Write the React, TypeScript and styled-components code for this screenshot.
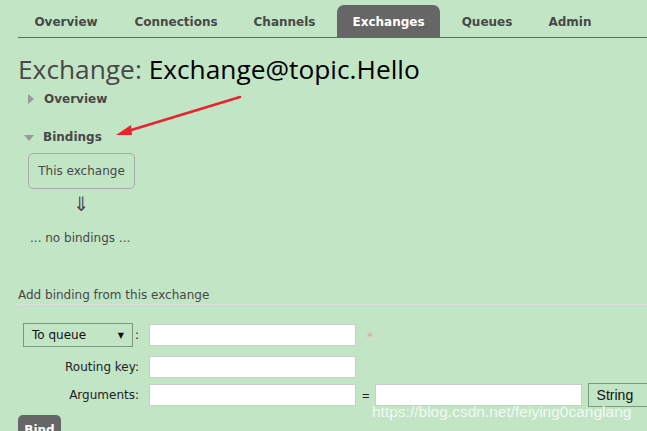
import React from "react";
import styled, { createGlobalStyle } from "styled-components";

const Global = createGlobalStyle`
  html, body { margin: 0; padding: 0; }
  body {
    background: #c2e5c6;
    font-family: "DejaVu Sans", Verdana, sans-serif;
    font-size: 12px;
    color: #484848;
    width: 647px;
    height: 431px;
    overflow: hidden;
  }
`;

const Page = styled.div`
  position: relative;
  width: 647px;
  height: 431px;
  overflow: hidden;
`;

const Nav = styled.ul`
  list-style: none;
  margin: 0 0 0 18px;
  padding: 5px 0 0 1px;
  display: flex;
  gap: 7px;
  border-bottom: 1px solid #666;
  width: 700px;
`;

const Tab = styled.li<{ $active?: boolean; $w: number }>`
  flex-shrink: 0;
  width: ${(p) => p.$w}px;
  height: 32px;
  display: flex;
  align-items: center;
  justify-content: center;
  padding-top: 1px;
  box-sizing: border-box;
  font-weight: bold;
  font-size: 12px;
  border-radius: 7px 7px 0 0;
  color: ${(p) => (p.$active ? "#fff" : "#484848")};
  background: ${(p) => (p.$active ? "#666" : "transparent")};
`;

const Main = styled.div`
  padding-left: 18px;
`;

const Title = styled.h1`
  margin: 16px 0 0 0;
  font-family: "Open Sans", "DejaVu Sans", sans-serif;
  font-weight: normal;
  font-size: 26.3px;
  line-height: 31px;
  color: #484848;
  white-space: nowrap;
`;

const Name = styled.span`
  color: #000;
`;

const Section = styled.h2<{ $mt: number }>`
  margin: ${(p) => p.$mt}px 0 0 0;
  font-size: 12px;
  font-weight: bold;
  line-height: 20px;
  color: #484848;
  display: flex;
  align-items: center;
`;

const Tri = styled.span<{ $open?: boolean }>`
  display: inline-block;
  width: 0;
  height: 0;
  ${(p) =>
    p.$open
      ? `border-left: 5px solid transparent; border-right: 5px solid transparent; border-top: 6px solid #999; margin: 1px 9px 0 6px;`
      : `border-top: 5px solid transparent; border-bottom: 5px solid transparent; border-left: 6px solid #999; margin: 0 10px 0 10px;`}
`;

const Bindings = styled.div`
  margin-left: 10px;
  width: 107px;
  display: flex;
  flex-direction: column;
  align-items: center;
`;

const ExBox = styled.div`
  margin-top: 6px;
  width: 107px;
  height: 36px;
  box-sizing: border-box;
  border: 1px solid #aaa;
  border-radius: 5px;
  display: flex;
  align-items: center;
  justify-content: center;
  font-size: 12px;
  color: #484848;
  white-space: nowrap;
`;

const Down = styled.div`
  margin-top: 4px;
  font-size: 20px;
  line-height: 22px;
  color: #484848;
`;

const NoBindings = styled.div`
  margin: 15px 0 0 12px;
  font-size: 12px;
  line-height: 16px;
  white-space: nowrap;
`;

const FormHead = styled.h3`
  margin: 41px 0 0 0;
  font-size: 12px;
  font-weight: normal;
  line-height: 16px;
  color: #484848;
  padding-bottom: 1px;
  border-bottom: 1px solid #ddd;
  width: 700px;
`;

const FormRow = styled.div<{ $mt: number }>`
  display: flex;
  align-items: center;
  margin-top: ${(p) => p.$mt}px;
  width: 720px;
`;

const LabelCell = styled.div`
  flex-shrink: 0;
  width: 121px;
  margin-right: 10px;
  display: flex;
  justify-content: flex-end;
  align-items: center;
  font-size: 12px;
  color: #222;
  white-space: nowrap;
`;

const Select = styled.div<{ $w: number; $h: number }>`
  flex-shrink: 0;
  width: ${(p) => p.$w}px;
  height: ${(p) => p.$h}px;
  box-sizing: border-box;
  border: 1px solid #7a9a7e;
  display: flex;
  align-items: center;
  justify-content: space-between;
  padding: 0 8px 0 8px;
  font-size: 12px;
  color: #111;
`;

const SelectString = styled(Select)`
  font-family: "Liberation Sans", Arial, sans-serif;
  font-size: 14px;
  margin-left: 6px;
`;

const Caret = styled.span`
  font-size: 8px;
  color: #111;
`;

const Colon = styled.span`
  margin: 0 0 0 2px;
  width: 4px;
  color: #222;
`;

const Input = styled.div<{ $h: number }>`
  flex-shrink: 0;
  width: 207px;
  height: ${(p) => p.$h}px;
  box-sizing: border-box;
  background: #fff;
  border: 1px solid #ccc;
`;

const Star = styled.span`
  margin-left: 11px;
  color: #f39c9c;
  font-size: 12px;
  position: relative;
  top: 2px;
`;

const Eq = styled.span`
  flex-shrink: 0;
  margin: 0 5px 0 6px;
  font-family: "Liberation Sans", Arial, sans-serif;
  font-size: 13px;
  color: #222;
`;

const BindBtn = styled.button`
  margin-top: 8px;
  width: 43px;
  height: 24px;
  border: none;
  border-radius: 5px;
  background: #666;
  color: #fff;
  font-family: "DejaVu Sans", Verdana, sans-serif;
  font-weight: bold;
  font-size: 12px;
  padding: 6px 0 0 0;
  display: block;
`;

const Watermark = styled.div`
  position: absolute;
  left: 372px;
  top: 403px;
  font-family: "Liberation Sans", Arial, sans-serif;
  font-size: 15.5px;
  color: rgba(255, 255, 255, 0.8);
  white-space: nowrap;
`;

const ArrowSvg = styled.svg`
  position: absolute;
  left: 0;
  top: 0;
  pointer-events: none;
`;

const tabs: { label: string; w: number; active?: boolean }[] = [
  { label: "Overview", w: 94 },
  { label: "Connections", w: 112 },
  { label: "Channels", w: 91 },
  { label: "Exchanges", w: 103, active: true },
  { label: "Queues", w: 80 },
  { label: "Admin", w: 72 },
];

export default function App() {
  return (
    <Page>
      <Global />
      <Nav>
        {tabs.map((t) => (
          <Tab key={t.label} $w={t.w} $active={t.active}>
            {t.label}
          </Tab>
        ))}
      </Nav>
      <Main>
        <Title>
          Exchange: <Name>Exchange@topic.Hello</Name>
        </Title>
        <Section $mt={4}>
          <Tri />
          Overview
        </Section>
        <Section $mt={18}>
          <Tri $open />
          Bindings
        </Section>
        <Bindings>
          <ExBox>This exchange</ExBox>
          <Down>⇓</Down>
        </Bindings>
        <NoBindings>... no bindings ...</NoBindings>
        <FormHead>Add binding from this exchange</FormHead>
        <FormRow $mt={18}>
          <LabelCell>
            <Select $w={110} $h={24}>
              <span>To queue</span>
              <Caret>▼</Caret>
            </Select>
            <Colon>:</Colon>
          </LabelCell>
          <Input $h={22} />
          <Star>*</Star>
        </FormRow>
        <FormRow $mt={9}>
          <LabelCell>Routing key:</LabelCell>
          <Input $h={22} />
        </FormRow>
        <FormRow $mt={5}>
          <LabelCell>Arguments:</LabelCell>
          <Input $h={22} />
          <Eq>=</Eq>
          <Input $h={22} />
          <SelectString $w={80} $h={24}>
            String
          </SelectString>
        </FormRow>
        <BindBtn>Bind</BindBtn>
      </Main>
      <ArrowSvg width="647" height="431" viewBox="0 0 647 431">
        <line x1="240" y1="97" x2="128" y2="131" stroke="#e8232b" strokeWidth="2.5" strokeLinecap="round" />
        <polygon points="116,135 131,125 132,135" fill="#e8232b" />
      </ArrowSvg>
      <Watermark>https://blog.csdn.net/feiying0canglang</Watermark>
    </Page>
  );
}
